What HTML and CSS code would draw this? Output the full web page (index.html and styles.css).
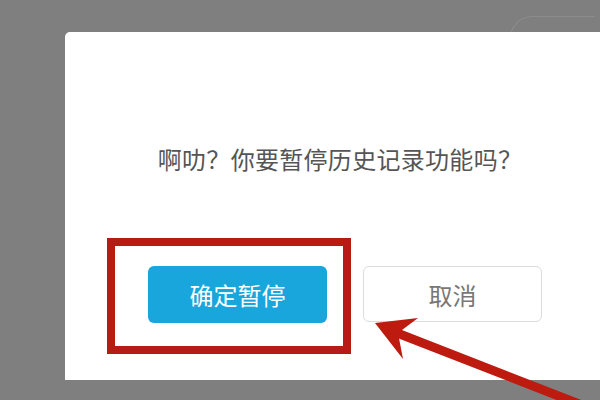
FILE: index.html
```html
<!DOCTYPE html>
<html lang="zh-CN">
<head>
<meta charset="utf-8">
<title>暂停历史记录</title>
<link rel="stylesheet" href="styles.css">
</head>
<body>
<div class="backdrop-shape"></div>
<div class="stage">
  <div class="dialog">
    <p class="message">啊叻？你要暂停历史记录功能吗？</p>
    <div class="actions">
      <div class="highlight">
        <button class="btn btn-primary">确定暂停</button>
      </div>
      <button class="btn btn-default">取消</button>
    </div>
  </div>
</div>
<svg class="arrow" width="600" height="400" viewBox="0 0 600 400" xmlns="http://www.w3.org/2000/svg">
  <line x1="392" y1="331" x2="610" y2="416" stroke="#bd1a10" stroke-width="9"/>
  <polygon points="375,323 418,318 398,333 403,359" fill="#bd1a10"/>
</svg>
</body>
</html>
```
FILE: styles.css
```css
html, body {
  margin: 0;
  padding: 0;
}
body {
  width: 600px;
  height: 400px;
  overflow: hidden;
  background: #7f7f7f;
  position: relative;
  font-family: "Noto Sans CJK SC", "Noto Sans", sans-serif;
}
.backdrop-shape {
  position: absolute;
  left: 510px;
  top: 16px;
  width: 84px;
  height: 60px;
  border: 1px solid #8c8c8c;
  border-right: none;
  border-radius: 22px 0 0 22px;
}
.stage {
  position: relative;
  padding: 32px 0 0 65px;
}
.dialog {
  width: 535px;
  height: 348px;
  background: #ffffff;
  border-radius: 5px 0 0 0;
  box-sizing: border-box;
  padding: 112px 0 0 42px;
}
.message {
  margin: 0;
  width: 466px;
  text-align: center;
  font-size: 24px;
  line-height: 30px;
  color: #555555;
  letter-spacing: 0.3px;
}
.actions {
  display: flex;
  align-items: flex-start;
  gap: 12px;
  margin-top: 64px;
}
.highlight {
  border: 8px solid #b71c14;
  padding: 20px 16px 23px 33px;
}
.btn {
  width: 179px;
  height: 57px;
  border-radius: 6px;
  font-family: "Noto Sans CJK SC", "Noto Sans", sans-serif;
  font-size: 24px;
  padding: 0;
  cursor: pointer;
}
.btn-primary {
  background: #19a6dc;
  border: none;
  color: #ffffff;
  display: block;
}
.btn-default {
  margin-top: 28px;
  height: 56px;
  background: #ffffff;
  border: 1px solid #dcdcdc;
  color: #777777;
}
.arrow {
  position: absolute;
  left: 0;
  top: 0;
}
```
